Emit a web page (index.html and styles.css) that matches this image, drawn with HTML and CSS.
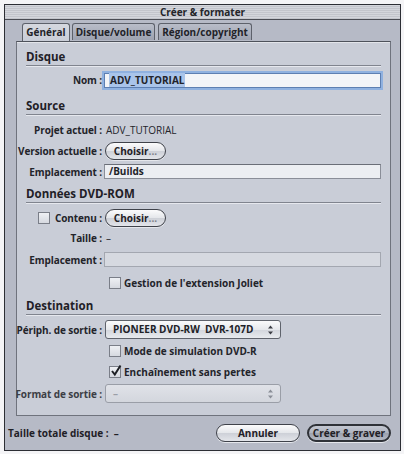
FILE: index.html
```html
<!DOCTYPE html>
<html lang="fr">

<head>
    <meta charset="UTF-8">
    <title>Créer &amp; formater</title>
    <link rel="stylesheet" href="styles.css">
</head>

<body>

    <div class="window">
        <div class="titlebar">Créer &amp; formater</div>

        <div class="content">
            <div class="tabs">
                <div class="tab active">Général</div>
                <div class="tab">Disque/volume</div>
                <div class="tab">Région/copyright</div>
            </div>

            <div class="panel">
                <!-- Disque -->
                <div class="section-title first">Disque</div>
                <div class="row row-tall">
                    <span class="label">Nom :</span>
                    <div class="field focus"><span class="selected">ADV_TUTORIAL</span></div>
                </div>

                <!-- Source -->
                <div class="section-title">Source</div>
                <div class="row first-row">
                    <span class="label">Projet actuel :</span>
                    <span class="value">ADV_TUTORIAL</span>
                </div>
                <div class="row">
                    <span class="label">Version actuelle :</span>
                    <div class="pill small">Choisir<span class="dots">...</span></div>
                </div>
                <div class="row">
                    <span class="label">Emplacement :</span>
                    <div class="field">/Builds</div>
                </div>

                <!-- Données DVD-ROM -->
                <div class="section-title">Données DVD-ROM</div>
                <div class="row first-row">
                    <span class="label"><span class="checkbox"></span>Contenu :</span>
                    <div class="pill small">Choisir<span class="dots">...</span></div>
                </div>
                <div class="row row-short">
                    <span class="label">Taille :</span>
                    <span class="value">–</span>
                </div>
                <div class="row row-mid">
                    <span class="label">Emplacement :</span>
                    <div class="field disabled"></div>
                </div>
                <div class="row row-mid">
                    <span class="label"></span>
                    <label class="check"><span class="checkbox"></span>Gestion de l'extension Joliet</label>
                </div>

                <!-- Destination -->
                <div class="section-title">Destination</div>
                <div class="row first-row">
                    <span class="label">Périph. de sortie :</span>
                    <div class="popup">PIONEER DVD-RW&nbsp; DVR-107D
                        <svg class="arrows" width="5" height="10" viewBox="0 0 5 10">
                            <path d="M0 3.5 L2.5 0.5 L5 3.5 Z M0 6.5 L2.5 9.5 L5 6.5 Z" fill="currentColor" />
                        </svg>
                    </div>
                </div>
                <div class="row">
                    <span class="label"></span>
                    <label class="check"><span class="checkbox"></span>Mode de simulation DVD-R</label>
                </div>
                <div class="row">
                    <span class="label"></span>
                    <label class="check"><span class="checkbox checked">
                        <svg width="12" height="13" viewBox="0 0 12 13">
                            <path d="M2 7 L4.8 10.5 L10.5 1.5" fill="none" stroke="#1e2026" stroke-width="2" />
                        </svg></span>Enchaînement sans pertes</label>
                </div>
                <div class="row row-mid">
                    <span class="label dim">Format de sortie :</span>
                    <div class="popup disabled">–
                        <svg class="arrows" width="5" height="10" viewBox="0 0 5 10">
                            <path d="M0 3.5 L2.5 0.5 L5 3.5 Z M0 6.5 L2.5 9.5 L5 6.5 Z" fill="currentColor" />
                        </svg>
                    </div>
                </div>
            </div>

            <div class="footer">
                <span class="total">Taille totale disque :&nbsp; –</span>
                <div class="buttons">
                    <div class="pill wide">Annuler</div>
                    <div class="pill wide default">Créer &amp; graver</div>
                </div>
            </div>
        </div>
    </div>

</body>

</html>
```

FILE: styles.css
```css
body {
    margin: 0;
    background: #f4f4f6;
    font-family: "Open Sans", "DejaVu Sans", sans-serif;
    font-size: 10px;
    color: #1c1d22;
}

* {
    box-sizing: border-box;
}

.window {
    margin: 4px;
    width: 397px;
    height: 447px;
    border: 1px solid #2c2e34;
    background: #b6bac6;
    display: flex;
    flex-direction: column;
}

.titlebar {
    height: 15px;
    line-height: 14px;
    text-align: center;
    font-weight: 700;
    color: #24252a;
    border-bottom: 1px solid #4a4c54;
    background: repeating-linear-gradient(to bottom, #d4d6dc 0, #d4d6dc 1px, #c3c5cc 1px, #c3c5cc 2px);
}

.content {
    flex: 1;
    display: flex;
    flex-direction: column;
}

/* tabs */

.tabs {
    display: flex;
    gap: 2px;
    margin: 3px 0 0 17px;
    height: 18px;
    position: relative;
    z-index: 1;
}

.tab {
    height: 17px;
    line-height: 16px;
    text-align: center;
    font-weight: 700;
    color: #222329;
    border: 1px solid #5d616b;
    border-bottom: none;
    border-radius: 3px 3px 0 0;
    background: linear-gradient(to bottom, #b9bdc8, #9da2b0);
}

.tab.active {
    width: 48px;
    height: 18px;
    background: linear-gradient(to bottom, #d5d8e0, #c9cdd7);
}

.tab:nth-child(2) {
    width: 83px;
}

.tab:nth-child(3) {
    width: 94px;
    margin-left: 1px;
}

/* panel */

.panel {
    margin: 0 9px 0 11px;
    height: 375px;
    border: 1px solid #6f737d;
    border-top-color: #4e525b;
    background: #c9cdd7;
    box-shadow: inset 0 1px 0 #e3e5ea;
}

.section-title {
    margin: 3px 9px 0 9px;
    height: 18px;
    line-height: 17px;
    font-size: 11.5px;
    font-weight: 700;
    color: #1f2026;
    border-bottom: 1px solid #80848e;
    box-shadow: 0 1px 0 #e6e8ee;
}

.section-title.first {
    margin-top: 6px;
}

.row {
    display: flex;
    align-items: center;
    height: 21px;
}

.row-tall {
    height: 28px;
}

.row-short {
    height: 20px;
}

.row-mid {
    height: 23px;
}

.first-row {
    margin-top: 4px;
}

.label {
    width: 85px;
    flex: none;
    display: flex;
    justify-content: flex-end;
    align-items: center;
    gap: 5px;
    margin-right: 2px;
    font-weight: 700;
    letter-spacing: -0.1px;
    color: #23242a;
    white-space: nowrap;
}

.label.dim {
    color: #3c3e45;
}

.value {
    margin-left: 2px;
    color: #24252b;
}

/* text fields */

.field {
    width: 277px;
    height: 15px;
    line-height: 13px;
    padding: 0 4px;
    border: 1px solid #8a8e98;
    border-top-color: #6a6e77;
    background: #eceef2;
    font-weight: 700;
    color: #222329;
}

.field.focus {
    box-shadow: 0 0 0 2px #8fb1e0;
    border-color: #5d7fb2;
    background: #f2f4f8;
}

.field.disabled {
    background: #d6d9e0;
    border-color: #a3a7b0;
}

.selected {
    background: #a9c4ea;
    padding: 0 1px;
}

/* buttons */

.pill {
    height: 18px;
    line-height: 16px;
    text-align: center;
    font-weight: 700;
    color: #1f2026;
    white-space: nowrap;
    border: 1px solid #3f424a;
    border-radius: 9px;
    background: linear-gradient(to bottom, #fbfbfc 0%, #e4e6ea 50%, #cdd0d7 51%, #e3e5ea 100%);
    box-shadow: 0 1px 0 #e5e7ec;
}

.pill.small {
    width: 61px;
    margin-left: 1px;
}

.pill .dots {
    color: #7c7f88;
}

.pill.wide {
    width: 84px;
}

.pill.default {
    border: 2px solid #2f3238;
    line-height: 14px;
    background: linear-gradient(to bottom, #c4c8d2 0%, #aeb3bf 50%, #9ca1ae 51%, #b3b8c4 100%);
}

/* checkboxes */

.checkbox {
    width: 12px;
    height: 12px;
    flex: none;
    position: relative;
    border: 1px solid #7a7e88;
    background: linear-gradient(to bottom, #eef0f4, #d6d9e0);
}

.checkbox svg {
    position: absolute;
    left: 0;
    top: -3px;
}

.check {
    display: flex;
    align-items: center;
    gap: 3px;
    margin-left: 5px;
    font-weight: 700;
    color: #23242a;
}

/* popup menus */

.popup {
    width: 176px;
    height: 19px;
    line-height: 17px;
    margin-left: 1px;
    padding: 0 0 0 7px;
    position: relative;
    border: 1px solid #5f636c;
    border-radius: 3px;
    background: linear-gradient(to bottom, #fafafb 0%, #e6e8ec 50%, #d2d5dc 51%, #e8eaee 100%);
    font-weight: 700;
    color: #202127;
}

.popup.disabled {
    color: #9a9ea7;
    border-color: #9a9ea7;
    background: linear-gradient(to bottom, #e0e2e8, #d3d6dd);
}

.arrows {
    position: absolute;
    right: 7px;
    top: 4px;
    color: #3a3c43;
}

.popup.disabled .arrows {
    color: #8a8e97;
}

/* footer */

.footer {
    flex: 1;
    display: flex;
    align-items: center;
    justify-content: space-between;
    padding: 0 9px 0 3px;
}

.total {
    font-weight: 700;
    color: #1f2026;
}

.buttons {
    display: flex;
    gap: 7px;
}
```
